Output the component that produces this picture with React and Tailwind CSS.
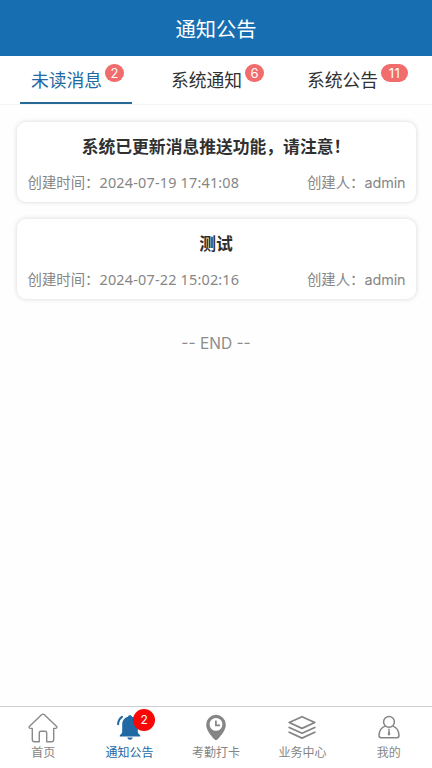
import React from "react";

const tabs = [
  { label: "未读消息", count: 2, active: true },
  { label: "系统通知", count: 6 },
  { label: "系统公告", count: 11 },
];

const messages = [
  {
    title: "系统已更新消息推送功能，请注意！",
    time: "2024-07-19 17:41:08",
    author: "admin",
  },
  { title: "测试", time: "2024-07-22 15:02:16", author: "admin" },
];

function HomeIcon() {
  return (
    <svg width="30" height="30" viewBox="0 0 30 30" fill="none" stroke="#8a8a8a" strokeWidth="1.4" strokeLinejoin="round">
      <path d="M13.8 1.6Q15 .6 16.2 1.6L28.4 13.2Q29.7 15 27.7 15.4H25.7V26.6Q25.7 28.8 23.5 28.8H18.7V19.8Q18.7 18.2 17.1 18.2H12.9Q11.3 18.2 11.3 19.8V28.8H6.5Q4.3 28.8 4.3 26.6V15.4H2.3Q.3 15 1.6 13.2Z" />
    </svg>
  );
}

function BellIcon() {
  return (
    <svg width="30" height="30" viewBox="0 0 30 30" fill="none">
      <path
        d="M15 2.2C16.2 2.2 16.9 2.8 17 3.8C20.8 4.8 22.8 7.7 22.8 11.6V18.2C22.8 20 23.6 21 25.2 22.2V23.4H4.8V22.2C6.4 21 7.2 20 7.2 18.2V11.6C7.2 7.7 9.2 4.8 13 3.8C13.1 2.8 13.8 2.2 15 2.2Z"
        fill="#2069a4"
      />
      <path d="M12.2 24.4H17.8Q17.2 26.8 15 26.8T12.2 24.4Z" fill="#2069a4" />
      <path d="M3.1 11.2Q3.3 6.3 7 3.8" stroke="#2069a4" strokeWidth="2" strokeLinecap="round" />
    </svg>
  );
}

function ClockPinIcon() {
  return (
    <svg width="30" height="30" viewBox="0 0 30 30" fill="none">
      <path
        fillRule="evenodd"
        d="M15 1.8A9.8 9.8 0 0 1 24.8 11.6C24.8 17.4 20 22.7 17 26.1Q15 28.2 13 26.1C10 22.7 5.2 17.4 5.2 11.6A9.8 9.8 0 0 1 15 1.8ZM15 5A6.4 6.4 0 1 0 15 17.8A6.4 6.4 0 1 0 15 5Z"
        fill="#858585"
      />
      <path d="M14.9 7.6V12.3H19" stroke="#858585" strokeWidth="1.7" />
    </svg>
  );
}

function LayersIcon() {
  return (
    <svg width="30" height="30" viewBox="0 0 30 30" fill="none" stroke="#858585" strokeWidth="1.8" strokeLinejoin="round" strokeLinecap="round">
      <path d="M15 3.7L27.8 9.5L15 15.4L2.2 9.5Z" />
      <path d="M2.2 14.5L15 20.3L27.8 14.5" />
      <path d="M2.2 19.2L15 25.1L27.8 19.2" />
    </svg>
  );
}

function UserIcon() {
  return (
    <svg width="30" height="30" viewBox="0 0 30 30" fill="none" stroke="#858585" strokeWidth="1.5" strokeLinejoin="round">
      <circle cx="15" cy="8.9" r="5.4" />
      <path d="M11.2 13.1C7.3 14.4 5.1 17.7 5 22.6Q5 24.8 7.2 24.8H22.8Q25 24.8 25 22.6C24.9 17.7 22.7 14.4 18.8 13.1" />
      <path d="M14.2 15.8H15.8L15.6 17.8L16.3 21.4L15 22.7L13.7 21.4L14.4 17.8Z" fill="#858585" stroke="none" />
    </svg>
  );
}

const navItems = [
  { label: "首页", Icon: HomeIcon },
  { label: "通知公告", Icon: BellIcon, count: 2, active: true },
  { label: "考勤打卡", Icon: ClockPinIcon },
  { label: "业务中心", Icon: LayersIcon },
  { label: "我的", Icon: UserIcon },
];

function Tab({ label, count, active }) {
  return (
    <div
      className={`flex h-12 w-28 justify-center border-b-[2.5px] pt-2 pl-[3px] ${
        active ? "border-[#286995] text-[#2069a4]" : "border-transparent text-[#303133]"
      }`}
    >
      <span className="pt-1 text-[17.8px] leading-[26px] whitespace-nowrap">{label}</span>
      <span
        className={`ml-[3px] flex h-[18px] shrink-0 items-center justify-center rounded-full bg-[#f16c6c] text-[13px] leading-none text-white ${
          count > 9 ? "w-[27px] tracking-[0.5px]" : "w-[19px]"
        }`}
      >
        {count}
      </span>
    </div>
  );
}

function MessageCard({ title, time, author }) {
  return (
    <div className="h-20 rounded-[9px] bg-white px-[11px] pt-3 shadow-[0_0_5px_rgba(0,0,0,0.16)]">
      <h2 className="text-center text-[16.8px] leading-[26px] font-bold text-[#303030]">{title}</h2>
      <div className="mt-[13px] flex justify-between text-[14.4px] leading-[20px] text-[#868686]">
        <div className="flex">
          <span>创建时间：</span>
          <span className="font-['Noto_Sans',sans-serif] tracking-[0.2px]">{time}</span>
        </div>
        <div className="-mr-px flex">
          <span>创建人：</span>
          <span className="tracking-[-0.1px]">{author}</span>
        </div>
      </div>
    </div>
  );
}

function NavItem({ label, Icon, count, active }) {
  return (
    <div className={`flex flex-1 flex-col items-center pt-[6px] ${active ? "text-[#2069a4]" : "text-[#858585]"}`}>
      <div className="relative h-[30px] w-[30px]">
        <Icon />
        {count && (
          <span className="absolute -top-[4px] left-[18.5px] flex h-[22px] w-[22px] items-center justify-center rounded-full bg-[#f90606] text-[12px] text-white">
            {count}
          </span>
        )}
      </div>
      <span className="mt-px text-[12px] leading-[18px]">{label}</span>
    </div>
  );
}

export default function App() {
  return (
    <div className="flex h-screen flex-col bg-white font-['Inter','Noto_Sans_CJK_SC',sans-serif]">
      <header className="flex h-14 shrink-0 items-center justify-center bg-[#176eb0] pt-[5px] text-[20.3px] text-white">
        通知公告
      </header>
      <div className="flex h-[49px] shrink-0 justify-between border-b border-[#f5f5f5] px-5">
        {tabs.map((tab) => (
          <Tab key={tab.label} {...tab} />
        ))}
      </div>
      <main className="flex flex-1 flex-col gap-[17px] bg-[#fefefe] px-[16.5px] pt-[16.5px]">
        {messages.map((message) => (
          <MessageCard key={message.time} {...message} />
        ))}
        <p className="mt-4 text-center text-[15.5px] leading-6 text-[#8c8c8c]">-- END --</p>
      </main>
      <nav className="flex h-[62px] shrink-0 border-t border-[#cfcfcf] bg-white">
        {navItems.map((item) => (
          <NavItem key={item.label} {...item} />
        ))}
      </nav>
    </div>
  );
}
